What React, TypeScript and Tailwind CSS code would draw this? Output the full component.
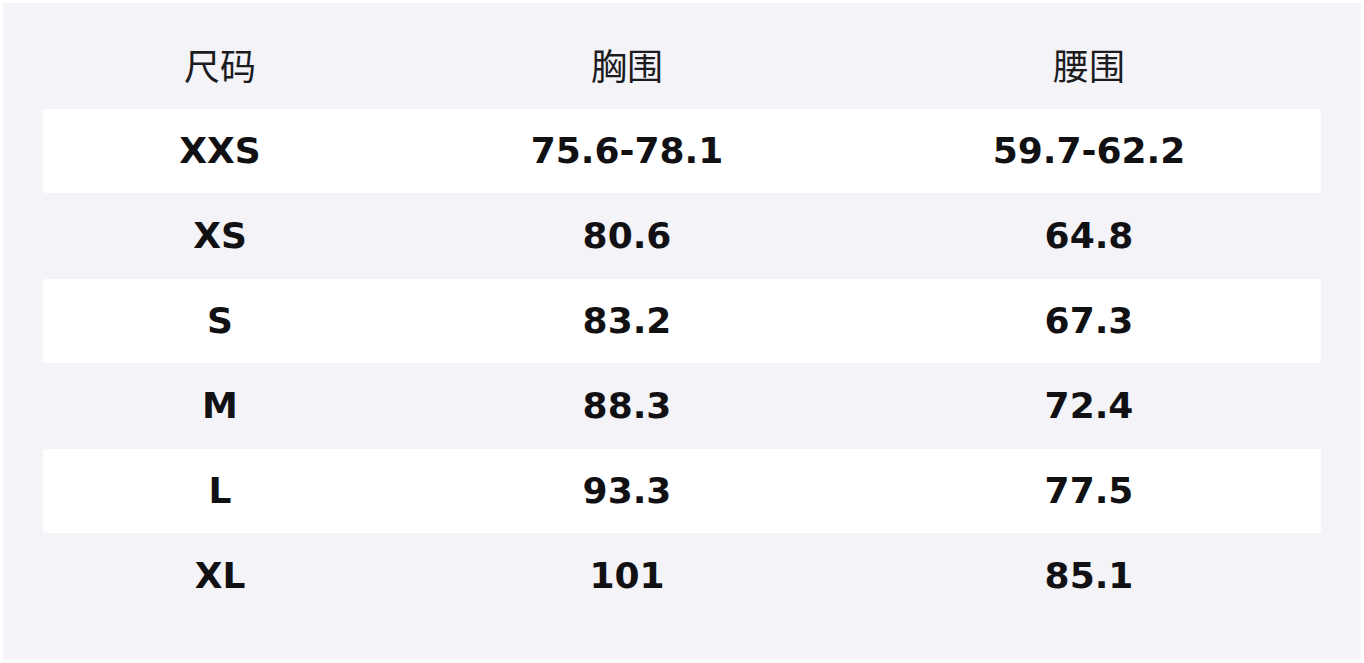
import React from "react";

interface ISizeRow {
    size: string;
    chest: string;
    waist: string;
}

const rows: ISizeRow[] = [
    { size: "XXS", chest: "75.6-78.1", waist: "59.7-62.2" },
    { size: "XS", chest: "80.6", waist: "64.8" },
    { size: "S", chest: "83.2", waist: "67.3" },
    { size: "M", chest: "88.3", waist: "72.4" },
    { size: "L", chest: "93.3", waist: "77.5" },
    { size: "XL", chest: "101", waist: "85.1" },
];

const App: React.FC = () => {
    return (
        <div className="w-[1364px] h-[663px] bg-white p-[3px]">
            <div className="w-full h-full bg-[#f3f3f8] px-[40px] pt-[25px]">
                <div className="grid grid-cols-[354px_460px_1fr] h-[81px] pb-[9px] items-center text-center text-[36px] text-[#1c1c1e] font-['Noto_Sans_CJK_SC',sans-serif]">
                    <div>尺码</div>
                    <div>胸围</div>
                    <div>腰围</div>
                </div>

                {rows.map((row, index) => (
                    <div
                        key={row.size}
                        className={`grid grid-cols-[354px_460px_1fr] items-center text-center text-[36px] font-bold text-[#111114] font-['DejaVu_Sans',sans-serif] ${
                            index % 2 === 0 ? "h-[84px] bg-white rounded-[3px]" : "h-[86px]"
                        }`}
                    >
                        <div>{row.size}</div>
                        <div>{row.chest}</div>
                        <div>{row.waist}</div>
                    </div>
                ))}
            </div>
        </div>
    );
};

export default App;
